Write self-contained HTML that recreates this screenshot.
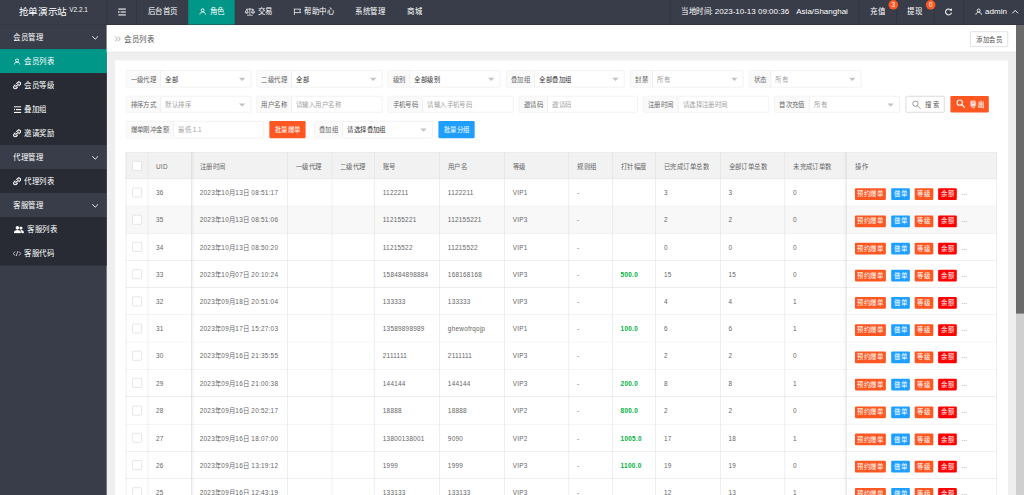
<!DOCTYPE html><html lang="zh-CN"><head><meta charset="utf-8"><title>会员列表</title><style>
*{box-sizing:border-box;margin:0;padding:0}
html,body{width:1024px;height:495px;overflow:hidden;background:#efefef}
body{font-family:"Liberation Sans",sans-serif;}
#app{position:absolute;left:0;top:0;width:1920px;height:928px;transform:scale(0.5333333333);transform-origin:0 0;overflow:hidden;background:#efefef;font-size:12px;color:#666;line-height:1}
.abs{position:absolute;white-space:nowrap;overflow:visible}
.j{text-align:justify;text-align-last:justify;white-space:nowrap;overflow:hidden}
#hd{position:absolute;left:0;top:0;width:1920px;height:46.5px;background:#393d49;color:#fff;font-size:14px;border-bottom:1px solid #2f323c}
#hd .t{position:absolute;top:0;height:42px;line-height:42px;white-space:nowrap;color:#fff}
#hd .sep{position:absolute;top:0;width:1px;height:46px;background:rgba(0,0,0,.22)}
#side{position:absolute;left:0;top:46.5px;width:200px;height:882px;background:#393d49;color:#fff;font-size:14px}
#side .row{position:absolute;left:0;width:200px;height:45px;line-height:45px;white-space:nowrap}
#side .grp{background:#393d49}
#side .it{background:#282b33}
#side .on{background:#009688}
#side .row span{position:absolute;top:0}
#side svg{position:absolute}
.bar{position:absolute;left:200px;top:46.5px;width:1705px;height:51px;background:#fff;border-bottom:1px solid #dcdcdc;box-shadow:0 1px 3px rgba(0,0,0,.12)}
.card{position:absolute;left:215px;top:112px;width:1676px;height:830px;background:#fff;border:1px solid #e9e9e9}
.g{position:absolute;height:31.5px;border:1px solid #e6e6e6;border-radius:2px;background:#fff;overflow:hidden}
.g .l{position:absolute;left:0;top:0;height:30px;line-height:32.5px;background:#fafafa;border-right:1px solid #e6e6e6;padding:0 8px 0 8px;text-align:justify;text-align-last:justify;color:#666;white-space:nowrap;overflow:hidden}
.g .v{position:absolute;top:0;height:30px;line-height:32.5px;white-space:nowrap;color:#333}
.g .ph{color:#a0a0a0}
.g .c{position:absolute;right:10px;top:13px;width:0;height:0;border:6px solid transparent;border-top-color:#c2c2c2;border-bottom-width:0}
.btn{position:absolute;height:31.5px;line-height:32px;border-radius:2px;color:#fff;text-align:justify;text-align-last:justify;white-space:nowrap;font-size:12px;overflow:hidden}
.tb{position:absolute;left:235px;top:284.5px;width:1634px;height:700px}
.tr{position:absolute;left:0;width:1634px;border-bottom:1px solid #dedede;background:#fff}
.th{background:#f2f2f2}
.hv{background:#f8f8f8}
.vl{position:absolute;top:0;width:1px;background:#e0e0e0}
.td{position:absolute;top:0;white-space:nowrap;color:#666;font-size:12px;letter-spacing:.45px}
.cb{position:absolute;left:13px;width:18px;height:18px;border:1px solid #d2d2d2;border-radius:2px;background:#fff}
.b{position:absolute;height:22px;line-height:22px;border-radius:2px;color:#fff;text-align:justify;text-align-last:justify;font-size:12px;white-space:nowrap;overflow:hidden}
.or{background:#ff5722}.bl{background:#1e9fff}.rd{background:#ff0000}
.gr{color:#00b03c;font-weight:bold;letter-spacing:.55px}
</style></head><body><div id="app">
<div id="hd">
<div class="abs j" style="left:35px;top:13px;font-size:18px;line-height:20px;width:90.5px;color:#fff">抢单演示站</div>
<div class="abs" style="left:130px;top:12px;font-size:12px;line-height:12px;color:#f4f4f4">V2.2.1</div>
<div class="sep" style="left:200px"></div>
<div class="sep" style="left:256px"></div>
<div class="sep" style="left:1256px"></div>
<div class="sep" style="left:1610px"></div>
<div class="sep" style="left:1681px"></div>
<div class="sep" style="left:1751px"></div>
<div class="sep" style="left:1806px"></div>
<svg class="abs" style="left:222px;top:16px" width="14" height="13" viewBox="0 0 14 13"><g fill="#fff"><rect x="0" y="0" width="14" height="2"/><rect x="4" y="5.5" width="10" height="2"/><rect x="0" y="11" width="14" height="2"/><path d="M0 4.2 L2.8 6.5 L0 8.8Z"/></g></svg>
<div class="t j" style="left:277px;width:56.5px">后台首页</div>
<div class="abs" style="left:353px;top:0;width:87px;height:46px;background:#009688"></div>
<svg class="abs" style="left:374px;top:15px" width="12" height="13" viewBox="0 0 14 14"><g fill="none" stroke="#fff" stroke-width="1.9"><circle cx="7" cy="4.3" r="3.2"/><path d="M1 13.6 C1 9.6 3.6 8.4 7 8.4 C10.4 8.4 13 9.6 13 13.6"/></g></svg>
<div class="t j" style="left:393px;width:28.5px">角色</div>
<svg class="abs" style="left:459px;top:14px" width="19" height="16" viewBox="0 0 19 16"><g fill="none" stroke="#fff" stroke-width="1.3"><path d="M9.5 1 V13.5 M4 14.5 H15 M3 3.2 H16"/><path d="M0.8 9 L3.6 3.4 L6.4 9 Z M12.6 9 L15.4 3.4 L18.2 9 Z"/><path d="M0.8 9.3 C1.5 11.6 5.7 11.6 6.4 9.3 M12.6 9.3 C13.3 11.6 17.5 11.6 18.2 9.3"/></g></svg>
<div class="t j" style="left:483px;width:28.5px">交易</div>
<svg class="abs" style="left:551px;top:16px" width="14" height="12" viewBox="0 0 14 12"><g fill="none" stroke="#fff" stroke-width="1.4"><path d="M1 0 V12"/><path d="M1 1.2 H13 L10.8 4.4 L13 7.6 H1"/></g></svg>
<div class="t j" style="left:570px;width:56.5px">帮助中心</div>
<div class="t j" style="left:666px;width:56.5px">系统管理</div>
<div class="t j" style="left:763px;width:28.5px">商城</div>
<div class="t j" style="left:1277px;width:56.5px">当地时间</div>
<div class="t" style="left:1332px;font-size:15px">: 2023-10-13 09:00:36</div>
<div class="t" style="left:1493px;font-size:15px">Asia/Shanghai</div>
<div class="t j" style="left:1631px;width:28.5px">充值</div>
<div class="abs" style="left:1666px;top:0;width:18px;height:18px;border-radius:9px;background:#ff5722;color:#fff;font-size:12px;line-height:18px;text-align:center">3</div>
<div class="t j" style="left:1701px;width:28.5px">提现</div>
<div class="abs" style="left:1736px;top:0;width:18px;height:18px;border-radius:9px;background:#ff5722;color:#fff;font-size:12px;line-height:18px;text-align:center">0</div>
<svg class="abs" style="left:1771px;top:15px" width="15" height="15" viewBox="0 0 15 15"><path d="M12.2 4.2 A5.6 5.6 0 1 0 13 8.6" fill="none" stroke="#fff" stroke-width="1.9"/><path d="M9 4.8 L13.8 5.2 L13.6 0.6 Z" fill="#fff"/></svg>
<svg class="abs" style="left:1829px;top:15px" width="12" height="14" viewBox="0 0 14 14"><g fill="none" stroke="#fff" stroke-width="1.9"><circle cx="7" cy="4.3" r="3.2"/><path d="M1 13.6 C1 9.6 3.6 8.4 7 8.4 C10.4 8.4 13 9.6 13 13.6"/></g></svg>
<div class="t" style="left:1847px;font-size:15px">admin</div>
<svg class="abs" style="left:1897px;top:18px" width="13" height="8" viewBox="0 0 13 8"><path d="M1 7 L6.5 1.5 L12 7" fill="none" stroke="#fff" stroke-width="1.8"/></svg>
</div>
<div id="side">
<div class="row grp" style="top:0.0px;height:45.2px;line-height:46px">
<span class="j" style="left:25px;width:56.5px">会员管理</span>
<svg style="left:172px;top:20px" width="13" height="8" viewBox="0 0 13 8"><path d="M1 1 L6.5 6.5 L12 1" fill="none" stroke="#fff" stroke-width="1.7"/></svg>
</div>
<div class="row on" style="top:45.1px;height:45.2px;line-height:46px">
<svg style="left:26px;top:17px" width="12" height="13" viewBox="0 0 14 14"><g fill="none" stroke="#fff" stroke-width="1.9"><circle cx="7" cy="4.3" r="3.3"/><path d="M1 13.6 C1 9.6 3.6 8.4 7 8.4 C10.4 8.4 13 9.6 13 13.6"/></g></svg>
<span class="j" style="left:45px;width:56.5px">会员列表</span>
</div>
<div class="row it" style="top:90.2px;height:45.2px;line-height:46px">
<svg style="left:24px;top:15px" width="16" height="16" viewBox="0 0 16 16"><g fill="none" stroke="#fff" stroke-width="2.1" stroke-linecap="round"><path d="M5.6 10.4 L10.4 5.6"/><path d="M7.4 4.4 L9.4 2.4 A2.95 2.95 0 0 1 13.6 6.6 L11.6 8.6"/><path d="M8.6 11.6 L6.6 13.6 A2.95 2.95 0 0 1 2.4 9.4 L4.4 7.4"/></g></svg>
<span class="j" style="left:45px;width:56.5px">会员等级</span>
</div>
<div class="row it" style="top:135.3px;height:45.2px;line-height:46px">
<svg style="left:26px;top:17px" width="14" height="13" viewBox="0 0 14 13"><g fill="#fff"><rect x="0" y="0" width="14" height="2.2"/><rect x="4" y="5.4" width="10" height="2.2"/><rect x="0" y="10.8" width="14" height="2.2"/><path d="M0 4.2 L2.8 6.5 L0 8.8Z"/></g></svg>
<span class="j" style="left:45px;width:42.5px">叠加组</span>
</div>
<div class="row it" style="top:180.4px;height:45.2px;line-height:46px">
<svg style="left:24px;top:15px" width="16" height="16" viewBox="0 0 16 16"><g fill="none" stroke="#fff" stroke-width="2.1" stroke-linecap="round"><path d="M5.6 10.4 L10.4 5.6"/><path d="M7.4 4.4 L9.4 2.4 A2.95 2.95 0 0 1 13.6 6.6 L11.6 8.6"/><path d="M8.6 11.6 L6.6 13.6 A2.95 2.95 0 0 1 2.4 9.4 L4.4 7.4"/></g></svg>
<span class="j" style="left:45px;width:56.5px">邀请奖励</span>
</div>
<div class="row grp" style="top:225.5px;height:45.2px;line-height:46px">
<span class="j" style="left:25px;width:56.5px">代理管理</span>
<svg style="left:172px;top:20px" width="13" height="8" viewBox="0 0 13 8"><path d="M1 1 L6.5 6.5 L12 1" fill="none" stroke="#fff" stroke-width="1.7"/></svg>
</div>
<div class="row it" style="top:270.6px;height:45.2px;line-height:46px">
<svg style="left:24px;top:15px" width="16" height="16" viewBox="0 0 16 16"><g fill="none" stroke="#fff" stroke-width="2.1" stroke-linecap="round"><path d="M5.6 10.4 L10.4 5.6"/><path d="M7.4 4.4 L9.4 2.4 A2.95 2.95 0 0 1 13.6 6.6 L11.6 8.6"/><path d="M8.6 11.6 L6.6 13.6 A2.95 2.95 0 0 1 2.4 9.4 L4.4 7.4"/></g></svg>
<span class="j" style="left:45px;width:56.5px">代理列表</span>
</div>
<div class="row grp" style="top:315.7px;height:45.2px;line-height:46px">
<span class="j" style="left:25px;width:56.5px">客服管理</span>
<svg style="left:172px;top:20px" width="13" height="8" viewBox="0 0 13 8"><path d="M1 1 L6.5 6.5 L12 1" fill="none" stroke="#fff" stroke-width="1.7"/></svg>
</div>
<div class="row it" style="top:360.8px;height:45.2px;line-height:46px">
<svg style="left:26px;top:16px" width="19" height="15" viewBox="0 0 20 15"><g fill="#fff"><circle cx="7" cy="4" r="3.6"/><path d="M0 14.5 C0 9.5 3 8.2 7 8.2 C11 8.2 14 9.5 14 14.5Z"/><circle cx="14" cy="4.4" r="3"/><path d="M15 14.5 C15 11 14 9.4 12.6 8.6 C16.5 8 20 9.5 20 14.5Z"/></g></svg>
<span class="j" style="left:51px;width:56.5px">客服列表</span>
</div>
<div class="row it" style="top:405.9px;height:45.2px;line-height:46px">
<svg style="left:24px;top:18px" width="16" height="11" viewBox="0 0 17 11"><g fill="none" stroke="#fff" stroke-width="1.4"><path d="M4.5 1.5 L1 5.5 L4.5 9.5 M12.5 1.5 L16 5.5 L12.5 9.5 M10 0.5 L7 10.5"/></g></svg>
<span class="j" style="left:45px;width:56.5px">客服代码</span>
</div>
</div>
<div class="bar"></div>
<svg class="abs" style="left:215px;top:68px" width="12" height="10" viewBox="0 0 12 10"><path d="M1 0.5 L5 5 L1 9.5 M6.5 0.5 L10.5 5 L6.5 9.5" fill="none" stroke="#888" stroke-width="1.3"/></svg>
<div class="abs" style="left:233px;top:63px;font-size:14px;line-height:20px;color:#555;width:56.5px;text-align:justify;text-align-last:justify;overflow:hidden">会员列表</div>
<div class="abs" style="left:1819px;top:59px;width:71px;height:29px;border:1px solid #c9c9c9;border-radius:2px;background:#fff;color:#555;font-size:12px;line-height:29px;padding:0 10px;text-align:justify;text-align-last:justify;overflow:hidden">添加会员</div>
<div class="abs" style="left:1905px;top:47px;width:15px;height:881px;background:#cfcfcf"></div>
<div class="abs" style="left:1905px;top:47px;width:15px;height:541px;background:#6a6a6a"></div>
<div class="card"></div>
<div class="g" style="left:236px;top:132px;width:235px">
<div class="l" style="width:65px;padding:0 8px">一级代理</div>
<div class="v j" style="left:73px;width:24.5px;overflow:hidden">全部</div>
<div class="c"></div>
</div>
<div class="g" style="left:481px;top:132px;width:236px">
<div class="l" style="width:65px;padding:0 8px">二级代理</div>
<div class="v j" style="left:73px;width:24.5px;overflow:hidden">全部</div>
<div class="c"></div>
</div>
<div class="g" style="left:727px;top:132px;width:211px">
<div class="l" style="width:41px;padding:0 8px">级别</div>
<div class="v j" style="left:49px;width:48.5px;overflow:hidden">全部级别</div>
<div class="c"></div>
</div>
<div class="g" style="left:949px;top:132px;width:222px">
<div class="l" style="width:53px;padding:0 8px">叠加组</div>
<div class="v j" style="left:61px;width:60.5px;overflow:hidden">全部叠加组</div>
<div class="c"></div>
</div>
<div class="g" style="left:1182px;top:132px;width:212px">
<div class="l" style="width:41px;padding:0 8px">封禁</div>
<div class="v ph j" style="left:49px;width:24.5px;overflow:hidden">所有</div>
<div class="c"></div>
</div>
<div class="g" style="left:1404px;top:132px;width:211px">
<div class="l" style="width:41px;padding:0 8px">状态</div>
<div class="v ph j" style="left:49px;width:24.5px;overflow:hidden">所有</div>
<div class="c"></div>
</div>
<div class="g" style="left:236px;top:179.5px;width:235px">
<div class="l" style="width:65px;padding:0 8px">排序方式</div>
<div class="v ph j" style="left:73px;width:48.5px;overflow:hidden">默认排序</div>
<div class="c"></div>
</div>
<div class="g" style="left:481px;top:179.5px;width:236px">
<div class="l" style="width:65px;padding:0 8px">用户名称</div>
<div class="v ph j" style="left:73px;width:84.5px;overflow:hidden">请输入用户名称</div>
</div>
<div class="g" style="left:727px;top:179.5px;width:236px">
<div class="l" style="width:65px;padding:0 8px">手机号码</div>
<div class="v ph j" style="left:73px;width:84.5px;overflow:hidden">请输入手机号码</div>
</div>
<div class="g" style="left:973px;top:179.5px;width:223px">
<div class="l" style="width:53px;padding:0 8px">邀请码</div>
<div class="v ph j" style="left:61px;width:36.5px;overflow:hidden">邀请码</div>
</div>
<div class="g" style="left:1206px;top:179.5px;width:236px">
<div class="l" style="width:65px;padding:0 8px">注册时间</div>
<div class="v ph j" style="left:73px;width:84.5px;overflow:hidden">请选择注册时间</div>
</div>
<div class="g" style="left:1452px;top:179.5px;width:235px">
<div class="l" style="width:65px;padding:0 8px">首次充值</div>
<div class="v ph j" style="left:73px;width:24.5px;overflow:hidden">所有</div>
<div class="c"></div>
</div>
<div class="btn" style="left:1698px;top:179.5px;width:73px;background:#fff;border:1px solid #bdbdbd;color:#555;line-height:32px"><svg style="position:absolute;left:11px;top:7px" width="17" height="17" viewBox="0 0 17 17"><g fill="none" stroke="#777" stroke-width="1.4"><circle cx="6.5" cy="6.5" r="5"/><path d="M10.3 10.3 L15.4 15.4" stroke-linecap="round"/></g></svg><span style="position:absolute;left:35px;top:0;width:28px;overflow:hidden">搜索</span></div>
<div class="btn or" style="left:1782px;top:179.5px;width:72px"><svg style="position:absolute;left:11px;top:6px" width="17" height="17" viewBox="0 0 17 17"><g fill="none" stroke="#fff" stroke-width="2"><circle cx="6.5" cy="6.5" r="5"/><path d="M10.3 10.3 L15.4 15.4" stroke-linecap="round"/></g></svg><span style="position:absolute;left:36px;top:1px;width:27px;overflow:hidden;font-weight:bold">导出</span></div>
<div class="g" style="left:236px;top:227px;width:259px">
<div class="l" style="width:89px;padding:0 8px">爆单刚冲金额</div>
<div class="v ph" style="left:97px;width:120px;overflow:hidden">最低 1.1</div>
</div>
<div class="btn or" style="left:505px;top:227px;width:68px;padding:0 9.75px">批量爆单</div>
<div class="g" style="left:589px;top:227px;width:222px">
<div class="l" style="width:53px;padding:0 8px">叠加组</div>
<div class="v j" style="left:61px;width:72.5px;overflow:hidden">请选择叠加组</div>
<div class="c"></div>
</div>
<div class="btn bl" style="left:822px;top:227px;width:68px;padding:0 9.75px">批量分组</div>
<div class="tb">
<div class="tr th" style="top:0;height:51px;border-top:1px solid #e6e6e6">
<div class="cb" style="top:16px"></div>
<div class="td" style="left:57.5px;line-height:53px">UID</div>
<div class="td j" style="left:139.5px;line-height:53px;width:48.5px;letter-spacing:0">注册时间</div>
<div class="td j" style="left:320px;line-height:53px;width:48.5px;letter-spacing:0">一级代理</div>
<div class="td j" style="left:402.5px;line-height:53px;width:48.5px;letter-spacing:0">二级代理</div>
<div class="td j" style="left:482.75px;line-height:53px;width:24.5px;letter-spacing:0">账号</div>
<div class="td j" style="left:604.75px;line-height:53px;width:36.5px;letter-spacing:0">用户名</div>
<div class="td j" style="left:726.25px;line-height:53px;width:24.5px;letter-spacing:0">等级</div>
<div class="td j" style="left:847px;line-height:53px;width:36.5px;letter-spacing:0">规则组</div>
<div class="td j" style="left:928.5px;line-height:53px;width:48.5px;letter-spacing:0">打针幅度</div>
<div class="td j" style="left:1010px;line-height:53px;width:84.5px;letter-spacing:0">已完成订单总数</div>
<div class="td j" style="left:1131px;line-height:53px;width:72.5px;letter-spacing:0">全部订单总数</div>
<div class="td j" style="left:1252px;line-height:53px;width:72.5px;letter-spacing:0">未完成订单数</div>
<div class="td j" style="left:1368px;line-height:53px;width:24.5px;letter-spacing:0">操作</div>
</div>
<div class="tr" style="top:51.0px;height:51.1px">
<div class="cb" style="top:16px"></div>
<div class="td" style="left:57.5px;line-height:53px">36</div>
<div class="td" style="left:139.5px;line-height:53px">2023<span style="display:inline-block;width:12px;overflow:hidden;vertical-align:top;text-align:center">年</span>10<span style="display:inline-block;width:12px;overflow:hidden;vertical-align:top;text-align:center">月</span>13<span style="display:inline-block;width:12px;overflow:hidden;vertical-align:top;text-align:center">日</span> 08:51:17</div>
<div class="td" style="left:482.75px;line-height:53px">1122211</div>
<div class="td" style="left:604.75px;line-height:53px">1122211</div>
<div class="td" style="left:726.25px;line-height:53px">VIP1</div>
<div class="td" style="left:847px;line-height:53px">-</div>
<div class="td" style="left:1010px;line-height:53px">3</div>
<div class="td" style="left:1131px;line-height:53px">3</div>
<div class="td" style="left:1252px;line-height:53px">0</div>
<div class="b or" style="left:1368px;top:17px;width:58px;padding:0 4.75px">预约爆单</div>
<div class="b bl" style="left:1436px;top:17px;width:35px;padding:0 5.25px">做单</div>
<div class="b or" style="left:1480px;top:17px;width:35px;padding:0 5.25px">等级</div>
<div class="b rd" style="left:1524px;top:17px;width:35px;padding:0 5.25px">余额</div>
<div class="td" style="left:1568px;line-height:53px;color:#888;letter-spacing:0">...</div>
</div>
<div class="tr hv" style="top:102.1px;height:51.1px">
<div class="cb" style="top:16px"></div>
<div class="td" style="left:57.5px;line-height:53px">35</div>
<div class="td" style="left:139.5px;line-height:53px">2023<span style="display:inline-block;width:12px;overflow:hidden;vertical-align:top;text-align:center">年</span>10<span style="display:inline-block;width:12px;overflow:hidden;vertical-align:top;text-align:center">月</span>13<span style="display:inline-block;width:12px;overflow:hidden;vertical-align:top;text-align:center">日</span> 08:51:06</div>
<div class="td" style="left:482.75px;line-height:53px">112155221</div>
<div class="td" style="left:604.75px;line-height:53px">112155221</div>
<div class="td" style="left:726.25px;line-height:53px">VIP3</div>
<div class="td" style="left:847px;line-height:53px">-</div>
<div class="td" style="left:1010px;line-height:53px">2</div>
<div class="td" style="left:1131px;line-height:53px">2</div>
<div class="td" style="left:1252px;line-height:53px">0</div>
<div class="b or" style="left:1368px;top:17px;width:58px;padding:0 4.75px">预约爆单</div>
<div class="b bl" style="left:1436px;top:17px;width:35px;padding:0 5.25px">做单</div>
<div class="b or" style="left:1480px;top:17px;width:35px;padding:0 5.25px">等级</div>
<div class="b rd" style="left:1524px;top:17px;width:35px;padding:0 5.25px">余额</div>
<div class="td" style="left:1568px;line-height:53px;color:#888;letter-spacing:0">...</div>
</div>
<div class="tr" style="top:153.2px;height:51.1px">
<div class="cb" style="top:16px"></div>
<div class="td" style="left:57.5px;line-height:53px">34</div>
<div class="td" style="left:139.5px;line-height:53px">2023<span style="display:inline-block;width:12px;overflow:hidden;vertical-align:top;text-align:center">年</span>10<span style="display:inline-block;width:12px;overflow:hidden;vertical-align:top;text-align:center">月</span>13<span style="display:inline-block;width:12px;overflow:hidden;vertical-align:top;text-align:center">日</span> 08:50:20</div>
<div class="td" style="left:482.75px;line-height:53px">11215522</div>
<div class="td" style="left:604.75px;line-height:53px">11215522</div>
<div class="td" style="left:726.25px;line-height:53px">VIP1</div>
<div class="td" style="left:847px;line-height:53px">-</div>
<div class="td" style="left:1010px;line-height:53px">0</div>
<div class="td" style="left:1131px;line-height:53px">0</div>
<div class="td" style="left:1252px;line-height:53px">0</div>
<div class="b or" style="left:1368px;top:17px;width:58px;padding:0 4.75px">预约爆单</div>
<div class="b bl" style="left:1436px;top:17px;width:35px;padding:0 5.25px">做单</div>
<div class="b or" style="left:1480px;top:17px;width:35px;padding:0 5.25px">等级</div>
<div class="b rd" style="left:1524px;top:17px;width:35px;padding:0 5.25px">余额</div>
<div class="td" style="left:1568px;line-height:53px;color:#888;letter-spacing:0">...</div>
</div>
<div class="tr" style="top:204.4px;height:51.1px">
<div class="cb" style="top:16px"></div>
<div class="td" style="left:57.5px;line-height:53px">33</div>
<div class="td" style="left:139.5px;line-height:53px">2023<span style="display:inline-block;width:12px;overflow:hidden;vertical-align:top;text-align:center">年</span>10<span style="display:inline-block;width:12px;overflow:hidden;vertical-align:top;text-align:center">月</span>07<span style="display:inline-block;width:12px;overflow:hidden;vertical-align:top;text-align:center">日</span> 20:10:24</div>
<div class="td" style="left:482.75px;line-height:53px">158484898884</div>
<div class="td" style="left:604.75px;line-height:53px">168168168</div>
<div class="td" style="left:726.25px;line-height:53px">VIP3</div>
<div class="td" style="left:847px;line-height:53px">-</div>
<div class="td gr" style="left:928.5px;line-height:53px">500.0</div>
<div class="td" style="left:1010px;line-height:53px">15</div>
<div class="td" style="left:1131px;line-height:53px">15</div>
<div class="td" style="left:1252px;line-height:53px">0</div>
<div class="b or" style="left:1368px;top:17px;width:58px;padding:0 4.75px">预约爆单</div>
<div class="b bl" style="left:1436px;top:17px;width:35px;padding:0 5.25px">做单</div>
<div class="b or" style="left:1480px;top:17px;width:35px;padding:0 5.25px">等级</div>
<div class="b rd" style="left:1524px;top:17px;width:35px;padding:0 5.25px">余额</div>
<div class="td" style="left:1568px;line-height:53px;color:#888;letter-spacing:0">...</div>
</div>
<div class="tr" style="top:255.5px;height:51.1px">
<div class="cb" style="top:16px"></div>
<div class="td" style="left:57.5px;line-height:53px">32</div>
<div class="td" style="left:139.5px;line-height:53px">2023<span style="display:inline-block;width:12px;overflow:hidden;vertical-align:top;text-align:center">年</span>09<span style="display:inline-block;width:12px;overflow:hidden;vertical-align:top;text-align:center">月</span>18<span style="display:inline-block;width:12px;overflow:hidden;vertical-align:top;text-align:center">日</span> 20:51:04</div>
<div class="td" style="left:482.75px;line-height:53px">133333</div>
<div class="td" style="left:604.75px;line-height:53px">133333</div>
<div class="td" style="left:726.25px;line-height:53px">VIP3</div>
<div class="td" style="left:847px;line-height:53px">-</div>
<div class="td" style="left:1010px;line-height:53px">4</div>
<div class="td" style="left:1131px;line-height:53px">4</div>
<div class="td" style="left:1252px;line-height:53px">1</div>
<div class="b or" style="left:1368px;top:17px;width:58px;padding:0 4.75px">预约爆单</div>
<div class="b bl" style="left:1436px;top:17px;width:35px;padding:0 5.25px">做单</div>
<div class="b or" style="left:1480px;top:17px;width:35px;padding:0 5.25px">等级</div>
<div class="b rd" style="left:1524px;top:17px;width:35px;padding:0 5.25px">余额</div>
<div class="td" style="left:1568px;line-height:53px;color:#888;letter-spacing:0">...</div>
</div>
<div class="tr" style="top:306.6px;height:51.1px">
<div class="cb" style="top:16px"></div>
<div class="td" style="left:57.5px;line-height:53px">31</div>
<div class="td" style="left:139.5px;line-height:53px">2023<span style="display:inline-block;width:12px;overflow:hidden;vertical-align:top;text-align:center">年</span>09<span style="display:inline-block;width:12px;overflow:hidden;vertical-align:top;text-align:center">月</span>17<span style="display:inline-block;width:12px;overflow:hidden;vertical-align:top;text-align:center">日</span> 15:27:03</div>
<div class="td" style="left:482.75px;line-height:53px">13589898989</div>
<div class="td" style="left:604.75px;line-height:53px">ghewofrqojp</div>
<div class="td" style="left:726.25px;line-height:53px">VIP1</div>
<div class="td" style="left:847px;line-height:53px">-</div>
<div class="td gr" style="left:928.5px;line-height:53px">100.0</div>
<div class="td" style="left:1010px;line-height:53px">6</div>
<div class="td" style="left:1131px;line-height:53px">6</div>
<div class="td" style="left:1252px;line-height:53px">1</div>
<div class="b or" style="left:1368px;top:17px;width:58px;padding:0 4.75px">预约爆单</div>
<div class="b bl" style="left:1436px;top:17px;width:35px;padding:0 5.25px">做单</div>
<div class="b or" style="left:1480px;top:17px;width:35px;padding:0 5.25px">等级</div>
<div class="b rd" style="left:1524px;top:17px;width:35px;padding:0 5.25px">余额</div>
<div class="td" style="left:1568px;line-height:53px;color:#888;letter-spacing:0">...</div>
</div>
<div class="tr" style="top:357.7px;height:51.1px">
<div class="cb" style="top:16px"></div>
<div class="td" style="left:57.5px;line-height:53px">30</div>
<div class="td" style="left:139.5px;line-height:53px">2023<span style="display:inline-block;width:12px;overflow:hidden;vertical-align:top;text-align:center">年</span>09<span style="display:inline-block;width:12px;overflow:hidden;vertical-align:top;text-align:center">月</span>16<span style="display:inline-block;width:12px;overflow:hidden;vertical-align:top;text-align:center">日</span> 21:35:55</div>
<div class="td" style="left:482.75px;line-height:53px">2111111</div>
<div class="td" style="left:604.75px;line-height:53px">2111111</div>
<div class="td" style="left:726.25px;line-height:53px">VIP3</div>
<div class="td" style="left:847px;line-height:53px">-</div>
<div class="td" style="left:1010px;line-height:53px">2</div>
<div class="td" style="left:1131px;line-height:53px">2</div>
<div class="td" style="left:1252px;line-height:53px">0</div>
<div class="b or" style="left:1368px;top:17px;width:58px;padding:0 4.75px">预约爆单</div>
<div class="b bl" style="left:1436px;top:17px;width:35px;padding:0 5.25px">做单</div>
<div class="b or" style="left:1480px;top:17px;width:35px;padding:0 5.25px">等级</div>
<div class="b rd" style="left:1524px;top:17px;width:35px;padding:0 5.25px">余额</div>
<div class="td" style="left:1568px;line-height:53px;color:#888;letter-spacing:0">...</div>
</div>
<div class="tr" style="top:408.8px;height:51.1px">
<div class="cb" style="top:16px"></div>
<div class="td" style="left:57.5px;line-height:53px">29</div>
<div class="td" style="left:139.5px;line-height:53px">2023<span style="display:inline-block;width:12px;overflow:hidden;vertical-align:top;text-align:center">年</span>09<span style="display:inline-block;width:12px;overflow:hidden;vertical-align:top;text-align:center">月</span>16<span style="display:inline-block;width:12px;overflow:hidden;vertical-align:top;text-align:center">日</span> 21:00:38</div>
<div class="td" style="left:482.75px;line-height:53px">144144</div>
<div class="td" style="left:604.75px;line-height:53px">144144</div>
<div class="td" style="left:726.25px;line-height:53px">VIP3</div>
<div class="td" style="left:847px;line-height:53px">-</div>
<div class="td gr" style="left:928.5px;line-height:53px">200.0</div>
<div class="td" style="left:1010px;line-height:53px">8</div>
<div class="td" style="left:1131px;line-height:53px">8</div>
<div class="td" style="left:1252px;line-height:53px">1</div>
<div class="b or" style="left:1368px;top:17px;width:58px;padding:0 4.75px">预约爆单</div>
<div class="b bl" style="left:1436px;top:17px;width:35px;padding:0 5.25px">做单</div>
<div class="b or" style="left:1480px;top:17px;width:35px;padding:0 5.25px">等级</div>
<div class="b rd" style="left:1524px;top:17px;width:35px;padding:0 5.25px">余额</div>
<div class="td" style="left:1568px;line-height:53px;color:#888;letter-spacing:0">...</div>
</div>
<div class="tr" style="top:460.0px;height:51.1px">
<div class="cb" style="top:16px"></div>
<div class="td" style="left:57.5px;line-height:53px">28</div>
<div class="td" style="left:139.5px;line-height:53px">2023<span style="display:inline-block;width:12px;overflow:hidden;vertical-align:top;text-align:center">年</span>09<span style="display:inline-block;width:12px;overflow:hidden;vertical-align:top;text-align:center">月</span>16<span style="display:inline-block;width:12px;overflow:hidden;vertical-align:top;text-align:center">日</span> 20:52:17</div>
<div class="td" style="left:482.75px;line-height:53px">18888</div>
<div class="td" style="left:604.75px;line-height:53px">18888</div>
<div class="td" style="left:726.25px;line-height:53px">VIP2</div>
<div class="td" style="left:847px;line-height:53px">-</div>
<div class="td gr" style="left:928.5px;line-height:53px">800.0</div>
<div class="td" style="left:1010px;line-height:53px">2</div>
<div class="td" style="left:1131px;line-height:53px">2</div>
<div class="td" style="left:1252px;line-height:53px">0</div>
<div class="b or" style="left:1368px;top:17px;width:58px;padding:0 4.75px">预约爆单</div>
<div class="b bl" style="left:1436px;top:17px;width:35px;padding:0 5.25px">做单</div>
<div class="b or" style="left:1480px;top:17px;width:35px;padding:0 5.25px">等级</div>
<div class="b rd" style="left:1524px;top:17px;width:35px;padding:0 5.25px">余额</div>
<div class="td" style="left:1568px;line-height:53px;color:#888;letter-spacing:0">...</div>
</div>
<div class="tr" style="top:511.1px;height:51.1px">
<div class="cb" style="top:16px"></div>
<div class="td" style="left:57.5px;line-height:53px">27</div>
<div class="td" style="left:139.5px;line-height:53px">2023<span style="display:inline-block;width:12px;overflow:hidden;vertical-align:top;text-align:center">年</span>09<span style="display:inline-block;width:12px;overflow:hidden;vertical-align:top;text-align:center">月</span>16<span style="display:inline-block;width:12px;overflow:hidden;vertical-align:top;text-align:center">日</span> 18:07:00</div>
<div class="td" style="left:482.75px;line-height:53px">13800138001</div>
<div class="td" style="left:604.75px;line-height:53px">9090</div>
<div class="td" style="left:726.25px;line-height:53px">VIP2</div>
<div class="td" style="left:847px;line-height:53px">-</div>
<div class="td gr" style="left:928.5px;line-height:53px">1005.0</div>
<div class="td" style="left:1010px;line-height:53px">17</div>
<div class="td" style="left:1131px;line-height:53px">18</div>
<div class="td" style="left:1252px;line-height:53px">1</div>
<div class="b or" style="left:1368px;top:17px;width:58px;padding:0 4.75px">预约爆单</div>
<div class="b bl" style="left:1436px;top:17px;width:35px;padding:0 5.25px">做单</div>
<div class="b or" style="left:1480px;top:17px;width:35px;padding:0 5.25px">等级</div>
<div class="b rd" style="left:1524px;top:17px;width:35px;padding:0 5.25px">余额</div>
<div class="td" style="left:1568px;line-height:53px;color:#888;letter-spacing:0">...</div>
</div>
<div class="tr" style="top:562.2px;height:51.1px">
<div class="cb" style="top:16px"></div>
<div class="td" style="left:57.5px;line-height:53px">26</div>
<div class="td" style="left:139.5px;line-height:53px">2023<span style="display:inline-block;width:12px;overflow:hidden;vertical-align:top;text-align:center">年</span>09<span style="display:inline-block;width:12px;overflow:hidden;vertical-align:top;text-align:center">月</span>16<span style="display:inline-block;width:12px;overflow:hidden;vertical-align:top;text-align:center">日</span> 13:19:12</div>
<div class="td" style="left:482.75px;line-height:53px">1999</div>
<div class="td" style="left:604.75px;line-height:53px">1999</div>
<div class="td" style="left:726.25px;line-height:53px">VIP3</div>
<div class="td" style="left:847px;line-height:53px">-</div>
<div class="td gr" style="left:928.5px;line-height:53px">1100.0</div>
<div class="td" style="left:1010px;line-height:53px">19</div>
<div class="td" style="left:1131px;line-height:53px">19</div>
<div class="td" style="left:1252px;line-height:53px">0</div>
<div class="b or" style="left:1368px;top:17px;width:58px;padding:0 4.75px">预约爆单</div>
<div class="b bl" style="left:1436px;top:17px;width:35px;padding:0 5.25px">做单</div>
<div class="b or" style="left:1480px;top:17px;width:35px;padding:0 5.25px">等级</div>
<div class="b rd" style="left:1524px;top:17px;width:35px;padding:0 5.25px">余额</div>
<div class="td" style="left:1568px;line-height:53px;color:#888;letter-spacing:0">...</div>
</div>
<div class="tr" style="top:613.3px;height:51.1px">
<div class="cb" style="top:16px"></div>
<div class="td" style="left:57.5px;line-height:53px">25</div>
<div class="td" style="left:139.5px;line-height:53px">2023<span style="display:inline-block;width:12px;overflow:hidden;vertical-align:top;text-align:center">年</span>09<span style="display:inline-block;width:12px;overflow:hidden;vertical-align:top;text-align:center">月</span>16<span style="display:inline-block;width:12px;overflow:hidden;vertical-align:top;text-align:center">日</span> 12:43:19</div>
<div class="td" style="left:482.75px;line-height:53px">133133</div>
<div class="td" style="left:604.75px;line-height:53px">133133</div>
<div class="td" style="left:726.25px;line-height:53px">VIP3</div>
<div class="td" style="left:847px;line-height:53px">-</div>
<div class="td" style="left:1010px;line-height:53px">12</div>
<div class="td" style="left:1131px;line-height:53px">13</div>
<div class="td" style="left:1252px;line-height:53px">1</div>
<div class="b or" style="left:1368px;top:17px;width:58px;padding:0 4.75px">预约爆单</div>
<div class="b bl" style="left:1436px;top:17px;width:35px;padding:0 5.25px">做单</div>
<div class="b or" style="left:1480px;top:17px;width:35px;padding:0 5.25px">等级</div>
<div class="b rd" style="left:1524px;top:17px;width:35px;padding:0 5.25px">余额</div>
<div class="td" style="left:1568px;line-height:53px;color:#888;letter-spacing:0">...</div>
</div>
<div class="vl" style="left:0.5px;height:700px"></div>
<div class="vl" style="left:41.5px;height:700px"></div>
<div class="vl" style="left:123.5px;height:700px"></div>
<div class="vl" style="left:304px;height:700px"></div>
<div class="vl" style="left:386.5px;height:700px"></div>
<div class="vl" style="left:466.75px;height:700px"></div>
<div class="vl" style="left:588.75px;height:700px"></div>
<div class="vl" style="left:710.25px;height:700px"></div>
<div class="vl" style="left:831px;height:700px"></div>
<div class="vl" style="left:912.5px;height:700px"></div>
<div class="vl" style="left:994px;height:700px"></div>
<div class="vl" style="left:1115px;height:700px"></div>
<div class="vl" style="left:1236px;height:700px"></div>
<div class="vl" style="left:1352px;height:700px"></div>
<div class="vl" style="left:1633px;height:700px"></div>
<div class="abs" style="left:123.5px;top:0;width:6px;height:700px;background:linear-gradient(to right,rgba(0,0,0,.06),rgba(0,0,0,0))"></div>
<div class="abs" style="left:1346px;top:0;width:6px;height:700px;background:linear-gradient(to left,rgba(0,0,0,.06),rgba(0,0,0,0))"></div>
</div>
</div></body></html>
